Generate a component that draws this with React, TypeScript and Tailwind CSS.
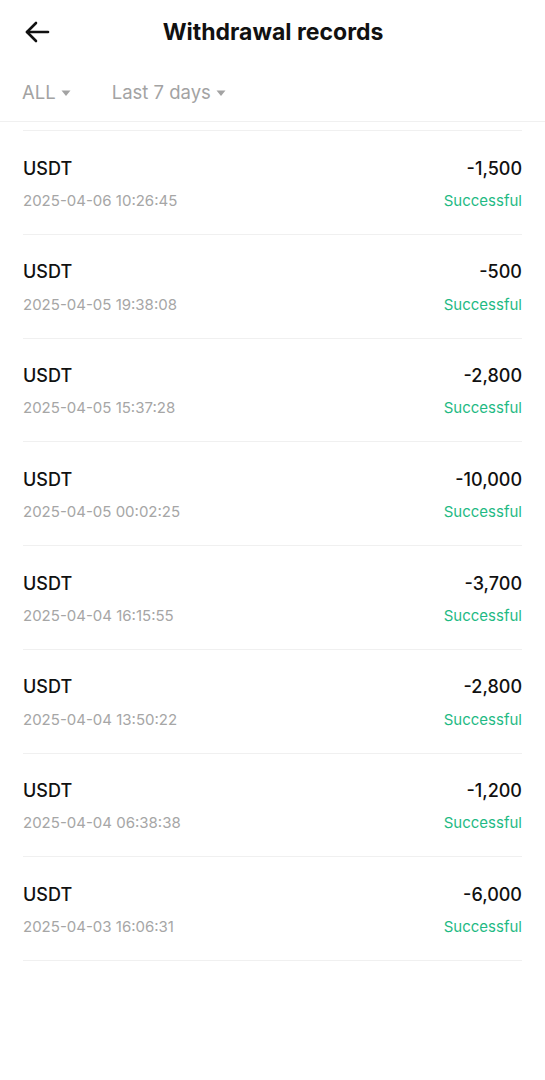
import React from "react";

const rows = [
  ["-1,500", "2025-04-06 10:26:45"],
  ["-500", "2025-04-05 19:38:08"],
  ["-2,800", "2025-04-05 15:37:28"],
  ["-10,000", "2025-04-05 00:02:25"],
  ["-3,700", "2025-04-04 16:15:55"],
  ["-2,800", "2025-04-04 13:50:22"],
  ["-1,200", "2025-04-04 06:38:38"],
  ["-6,000", "2025-04-03 16:06:31"],
];

function Caret() {
  return (
    <svg width="10" height="7" viewBox="0 0 10 7" className="ml-[5px] mt-[2px]">
      <path d="M0.5 0.5 H9.5 L5 6 Z" fill="#a3a3a3" />
    </svg>
  );
}

export default function App() {
  return (
    <div
      className="w-[545px] h-[1080px] bg-white text-[#111]"
      style={{ fontFamily: "Inter, 'Noto Sans', sans-serif" }}
    >
      <div className="relative h-[64px] flex items-center justify-center">
        <svg
          width="26"
          height="22"
          viewBox="0 0 26 22"
          className="absolute left-[25px] top-[21px]"
          fill="none"
          stroke="#111"
          strokeWidth="2.6"
          strokeLinecap="round"
          strokeLinejoin="round"
        >
          <path d="M2 11 H23" />
          <path d="M11 2 L2 11 L11 20" />
        </svg>
        <div className="text-[23px] font-bold tracking-[0px] leading-none pl-[1px]">Withdrawal records</div>
      </div>
      <div className="h-[58px] flex items-center pl-[22px] border-b border-[#f0f0f0] text-[18.5px] text-[#a3a3a3]">
        <div className="flex items-center">
          <span>ALL</span>
          <Caret />
        </div>
        <div className="flex items-center ml-[41px]">
          <span>Last 7 days</span>
          <Caret />
        </div>
      </div>
      <div className="px-[23px] pt-[8px]">
        <div className="border-t border-[#f0f0f0]">
          {rows.map(([amt, date], i) => (
            <div
              key={i}
              className="h-[103.75px] border-b border-[#f0f0f0] flex flex-col justify-start pt-[25px]"
            >
              <div className="flex justify-between items-center h-[24px]">
                <span className="text-[18px] font-medium">USDT</span>
                <span className="text-[18px] font-medium">{amt}</span>
              </div>
              <div className="flex justify-between items-center h-[20px] mt-[11px]">
                <span className="text-[15px] text-[#a6a6a6]">{date}</span>
                <span className="text-[15px] text-[#1fba84]">Successful</span>
              </div>
            </div>
          ))}
        </div>
      </div>
    </div>
  );
}
